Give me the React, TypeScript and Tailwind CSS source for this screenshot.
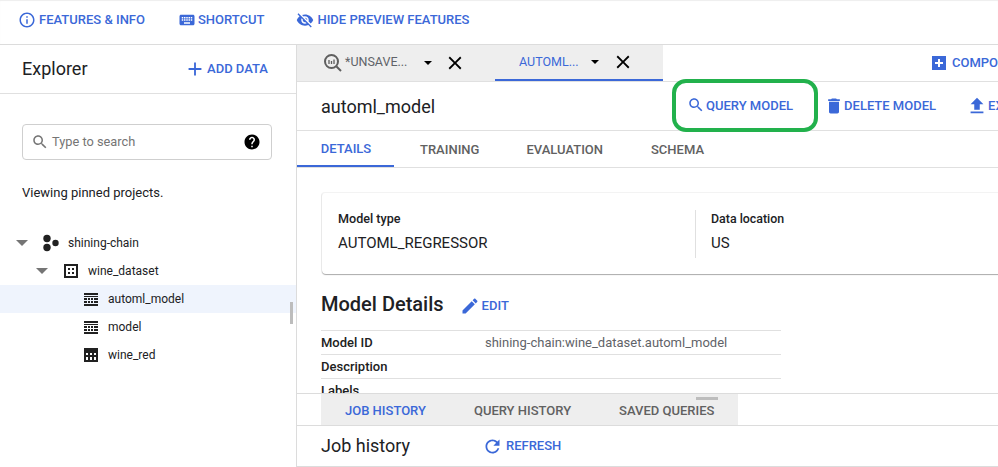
import React from "react";

const Blue = "text-[#3b68d8]";

function Ic({ d, size = 18, className = "", fill = "currentColor" }: { d: string; size?: number; className?: string; fill?: string }) {
  return (
    <svg width={size} height={size} viewBox="0 0 24 24" fill={fill} className={"shrink-0 " + className}>
      <path d={d} />
    </svg>
  );
}

const P = {
  info: "M11 7h2v2h-2zm0 4h2v6h-2zm1-9C6.48 2 2 6.48 2 12s4.48 10 10 10 10-4.48 10-10S17.52 2 12 2zm0 18c-4.41 0-8-3.59-8-8s3.59-8 8-8 8 3.59 8 8-3.59 8-8 8z",
  keyboard: "M20 5H4c-1.1 0-1.99.9-1.99 2L2 17c0 1.1.9 2 2 2h16c1.1 0 2-.9 2-2V7c0-1.1-.9-2-2-2zm-9 3h2v2h-2V8zm0 3h2v2h-2v-2zM8 8h2v2H8V8zm0 3h2v2H8v-2zm-1 2H5v-2h2v2zm0-3H5V8h2v2zm9 7H8v-2h8v2zm0-4h-2v-2h2v2zm0-3h-2V8h2v2zm3 3h-2v-2h2v2zm0-3h-2V8h2v2z",
  eyeOff: "M12 7c2.76 0 5 2.24 5 5 0 .65-.13 1.26-.36 1.83l2.92 2.92c1.51-1.26 2.7-2.89 3.43-4.75-1.73-4.39-6-7.5-11-7.5-1.4 0-2.74.25-3.98.7l2.16 2.16C10.74 7.13 11.35 7 12 7zM2 4.27l2.28 2.28.46.46C3.08 8.3 1.78 10.02 1 12c1.73 4.39 6 7.5 11 7.5 1.55 0 3.03-.3 4.38-.84l.42.42L19.73 22 21 20.73 3.27 3 2 4.27zM7.53 9.8l1.55 1.55c-.05.21-.08.43-.08.65 0 1.66 1.34 3 3 3 .22 0 .44-.03.65-.08l1.55 1.55c-.67.33-1.41.53-2.2.53-2.76 0-5-2.24-5-5 0-.79.2-1.53.53-2.2zm4.31-.78l3.15 3.15.02-.16c0-1.66-1.34-3-3-3l-.17.01z",
  plus: "M19 13h-6v6h-2v-6H5v-2h6V5h2v6h6v2z",
  close: "M19 6.41 17.59 5 12 10.59 6.41 5 5 6.41 10.59 12 5 17.59 6.41 19 12 13.41 17.59 19 19 17.59 13.41 12z",
  search: "M15.5 14h-.79l-.28-.27C15.41 12.59 16 11.11 16 9.5 16 5.91 13.09 3 9.5 3S3 5.91 3 9.5 5.91 16 9.5 16c1.61 0 3.09-.59 4.23-1.57l.27.28v.79l5 4.99L20.49 19l-4.99-5zm-6 0C7.01 14 5 11.99 5 9.5S7.01 5 9.5 5 14 7.01 14 9.5 11.99 14 9.5 14z",
  help: "M12 2C6.48 2 2 6.48 2 12s4.48 10 10 10 10-4.48 10-10S17.52 2 12 2zm1 17h-2v-2h2v2zm2.07-7.75-.9.92C13.45 12.9 13 13.5 13 15h-2v-.5c0-1.1.45-2.1 1.17-2.83l1.24-1.26c.37-.36.59-.86.59-1.41 0-1.1-.9-2-2-2s-2 .9-2 2H8c0-2.21 1.79-4 4-4s4 1.79 4 4c0 .88-.36 1.68-.93 2.25z",
  trash: "M6 19c0 1.1.9 2 2 2h8c1.1 0 2-.9 2-2V7H6v12zM19 4h-3.5l-1-1h-5l-1 1H5v2h14V4z",
  upload: "M9 16h6v-6h4l-7-7-7 7h4zm-4 2h14v2H5z",
  edit: "M3 17.25V21h3.75L17.81 9.94l-3.75-3.75L3 17.25zM20.71 7.04c.39-.39.39-1.02 0-1.41l-2.34-2.34c-.39-.39-1.02-.39-1.41 0l-1.83 1.83 3.75 3.75 1.83-1.83z",
  refresh: "M17.65 6.35C16.2 4.9 14.21 4 12 4c-4.42 0-7.99 3.58-7.99 8s3.57 8 7.99 8c3.73 0 6.84-2.55 7.73-6h-2.08c-.82 2.33-3.04 4-5.65 4-3.31 0-6-2.69-6-6s2.69-6 6-6c1.66 0 3.14.69 4.22 1.78L13 11h7V4l-2.35 2.35z",
};

function TopLink({ icon, label, gap }: { icon: string; label: string; gap: string }) {
  return (
    <div className={`flex items-center ${gap} ${Blue} text-[13px] font-medium`}>
      <Ic d={icon} size={18} />
      <span>{label}</span>
    </div>
  );
}

function Caret({ className = "" }: { className?: string }) {
  return <div className={"h-0 w-0 border-x-[4px] border-t-[4px] border-x-transparent " + className} />;
}

function TreeIcon({ kind }: { kind: "model" | "table" }) {
  if (kind === "model")
    return (
      <svg width="14" height="13" viewBox="0 0 14 13" className="shrink-0" fill="#212121">
        <rect x="0" y="0" width="14" height="2" />
        <rect x="0" y="3" width="14" height="1" />
        <rect x="0" y="5" width="3" height="2" />
        <rect x="4" y="5" width="2" height="2" />
        <rect x="7" y="5" width="2" height="2" />
        <rect x="10" y="5" width="4" height="2" />
        <rect x="0" y="8" width="3" height="2" />
        <rect x="4" y="8" width="2" height="2" />
        <rect x="7" y="8" width="2" height="2" />
        <rect x="10" y="8" width="4" height="2" />
        <rect x="0" y="11" width="14" height="2" />
      </svg>
    );
  return (
    <svg width="14" height="14" viewBox="0 0 14 14" className="shrink-0" fill="#212121">
      <path d="M0 0h14v14H0z" />
      <g fill="#fff">
        <rect x="2" y="5" width="2" height="2" />
        <rect x="6" y="5" width="2" height="2" />
        <rect x="10" y="5" width="2" height="2" />
        <rect x="2" y="9" width="2" height="3" />
        <rect x="6" y="9" width="2" height="3" />
        <rect x="10" y="9" width="2" height="3" />
      </g>
    </svg>
  );
}

function Row({ label, value, last }: { label: string; value?: string; last?: boolean }) {
  return (
    <div className={`flex h-6 items-center ${last ? "" : "border-b border-[#e0e0e0]"}`}>
      <div className="w-[164px] text-[13px] font-medium text-[#212121]">{label}</div>
      {value && <div className="text-[13px] text-[#5f6368]">{value}</div>}
    </div>
  );
}

function Sidebar() {
  return (
    <aside className="flex w-[297px] shrink-0 flex-col border-r border-[#dcdcdc]">
      <div className="flex h-[49px] shrink-0 items-center justify-between border-b border-[#e0e0e0] pb-[1px] pl-[22px] pr-[28px]">
        <h1 className="pb-[1px] text-[18px] text-[#202124]">Explorer</h1>
        <div className={`flex items-center gap-[1px] ${Blue} text-[13px] font-medium`}>
          <Ic d={P.plus} size={22} />
          <span>ADD DATA</span>
        </div>
      </div>
      <div className="mx-[22px] mt-[30px] flex h-9 w-[250px] items-center rounded border border-[#cfcfcf] pl-2 pr-[10px]">
        <Ic d={P.search} size={18} className="text-[#757575]" />
        <span className="ml-[3px] flex-1 text-[12.8px] text-[#757575]">Type to search</span>
        <Ic d={P.help} size={18} className="text-black" />
      </div>
      <p className="ml-[22px] mt-[25px] text-[13px] leading-4 text-[#202124]">Viewing pinned projects.</p>
      <div className="relative mt-[28px] text-[12px] text-[#202124]">
        <div className="flex h-7 items-center pl-[16px]">
          <Caret className="border-x-[6px]! border-t-[6px]! border-t-[#757575]" />
          <svg width="18" height="18" viewBox="0 0 18 18" className="ml-[14px] shrink-0" fill="#212121">
            <circle cx="5" cy="4.5" r="3.7" />
            <circle cx="13.5" cy="9" r="3.2" />
            <circle cx="5" cy="13.5" r="3.7" />
          </svg>
          <span className="ml-[8px]">shining-chain</span>
        </div>
        <div className="flex h-7 items-center pl-[36px]">
          <Caret className="border-x-[6px]! border-t-[6px]! border-t-[#757575]" />
          <svg width="14" height="14" viewBox="0 0 14 14" className="ml-[16px] shrink-0" fill="#212121">
            <path d="M0 0h14v14H0zM2 2v10h10V2z" fillRule="evenodd" />
            <rect x="4" y="4" width="2" height="2" />
            <rect x="8" y="4" width="2" height="2" />
            <rect x="4" y="8" width="2" height="2" />
            <rect x="8" y="8" width="2" height="2" />
          </svg>
          <span className="ml-[10px]">wine_dataset</span>
        </div>
        <div className="flex h-7 items-center bg-[#eff4fd] pl-[84px]">
          <TreeIcon kind="model" />
          <span className="ml-[10px]">automl_model</span>
        </div>
        <div className="flex h-7 items-center pl-[84px]">
          <TreeIcon kind="model" />
          <span className="ml-[10px]">model</span>
        </div>
        <div className="flex h-7 items-center pl-[84px]">
          <TreeIcon kind="table" />
          <span className="ml-[10px]">wine_red</span>
        </div>
        <div className="absolute left-[290px] top-[73px] h-[22px] w-[3px] bg-[#bdbdbd]" />
      </div>
    </aside>
  );
}

function Tabs() {
  return (
    <div className="flex h-[37px] shrink-0 items-stretch border-b border-[#e0e0e0]">
      <div className="flex w-[198px] shrink-0 items-center bg-[#eeeeee] pb-[1px] pl-[26px]">
        <svg width="20" height="20" viewBox="0 0 20 20" className="shrink-0" fill="none">
          <circle cx="8.5" cy="8.5" r="6.5" stroke="#5f5f5f" strokeWidth="2" />
          <path d="M13.5 13.5 18 18" stroke="#5f5f5f" strokeWidth="2" />
          <path d="M6 7v4M8.5 8v3M11 6.5V11" stroke="#5f5f5f" strokeWidth="1.3" />
        </svg>
        <span className="ml-[2px] w-[66px] shrink-0 whitespace-nowrap text-[12.5px] text-[#5f6368]">*UNSAVE...</span>
        <Caret className="ml-[13px] shrink-0 border-t-black" />
        <Ic d={P.close} size={22} className="ml-[12px] text-black" />
      </div>
      <div className="flex w-[168px] shrink-0 items-center border-b-2 border-[#3b68d8] bg-[#eeeeee] pl-[24px]">
        <span className={`w-[66px] shrink-0 whitespace-nowrap text-[12.5px] ${Blue}`}>AUTOML...</span>
        <Caret className="ml-[6px] shrink-0 border-t-black" />
        <Ic d={P.close} size={22} className="ml-[13px] text-black" />
      </div>
      <div className={`ml-[269px] flex shrink-0 items-center gap-[6px] whitespace-nowrap ${Blue} text-[13px] font-medium`}>
        <svg width="14" height="14" viewBox="0 0 14 14" className="shrink-0">
          <path fill="#3b68d8" d="M0 0h14v14H0z" />
          <path fill="#fff" d="M6 3h2v3h3v2H8v3H6V8H3V6h3z" />
        </svg>
        <span>COMPOSE NEW QUERY</span>
      </div>
    </div>
  );
}

function Toolbar() {
  return (
    <div className="relative flex h-[49px] shrink-0 items-center border-b border-[#e0e0e0] pl-[24px]">
      <h2 className="w-[366px] shrink-0 text-[18px] text-[#202124]">automl_model</h2>
      <div className={`flex shrink-0 items-center whitespace-nowrap ${Blue} text-[13px] font-medium`}>
        <Ic d={P.search} size={18} className="mb-[2px]" />
        <span className="ml-[1px]">QUERY MODEL</span>
        <Ic d={P.trash} size={20} className="ml-[31px]" />
        <span>DELETE MODEL</span>
        <Ic d={P.upload} size={22} className="ml-[30px]" />
        <span>EXPORT MODEL</span>
      </div>
      <div className="absolute left-[375px] top-[-3px] h-[53px] w-[146px] rounded-[14px] border-[4px] border-[#22b14c]" />
    </div>
  );
}

function SubTabs() {
  return (
    <div className="flex h-[37px] shrink-0 items-stretch border-b border-[#e0e0e0] text-[13px] font-medium text-[#616161]">
      <div className={`flex w-[97px] shrink-0 items-center justify-center border-b-2 border-[#3b68d8] pl-[1px] pt-[2px] ${Blue}`}>DETAILS</div>
      <div className="ml-[26px] flex items-center pt-[1px]">TRAINING</div>
      <div className="ml-[47px] flex items-center pt-[1px]">EVALUATION</div>
      <div className="ml-[48px] flex items-center pt-[1px]">SCHEMA</div>
    </div>
  );
}

function Details() {
  return (
    <div className="min-h-0 flex-1 overflow-hidden pl-[25px]">
      <div className="mt-[24px] flex h-[82px] w-[800px] items-center rounded-sm border-t border-[#f3f3f3] pl-[16px] shadow-[0_1px_1px_#aaaaaa,-1px_0_0_#f0f0f0]">
        <div className="h-[48px] w-[358px] shrink-0 border-r border-[#e0e0e0]">
          <div className="text-[12.6px] font-medium leading-[18px] text-[#202124]">Model type</div>
          <div className="mt-[6px] text-[15px] leading-[18px] text-[#202124]">AUTOML_REGRESSOR</div>
        </div>
        <div className="flex h-[48px] flex-col pl-[15px]">
          <div className="text-[12.4px] font-medium leading-[18px] text-[#202124]">Data location</div>
          <div className="mt-[6px] text-[15px] leading-[18px] text-[#202124]">US</div>
        </div>
      </div>
      <div className="mt-[18px] flex h-[24px] items-center">
        <h3 className="-ml-[1px] text-[20px] font-medium text-[#202124]">Model Details</h3>
        <Ic d={P.edit} size={20} className={`ml-[16px] mt-[3px] ${Blue}`} />
        <span className={`ml-[2px] mt-[3px] text-[13px] font-medium ${Blue}`}>EDIT</span>
      </div>
      <div className="mt-[14px] w-[460px] -translate-x-[1px] border-t border-[#e0e0e0]">
        <Row label="Model ID" value="shining-chain:wine_dataset.automl_model" />
        <Row label="Description" />
        <Row label="Labels" last />
      </div>
    </div>
  );
}

function BottomPanel() {
  return (
    <div className="shrink-0 border-t border-[#dcdcdc]">
      <div className="flex h-[32px] border-b border-[#dcdcdc] pl-[24px]">
        <div className="relative flex w-[417px] items-center bg-[#eeeeee] pt-[3px] text-[13px] font-medium text-[#616161]">
          <span className={`ml-[24px] ${Blue}`}>JOB HISTORY</span>
          <span className="ml-[48px]">QUERY HISTORY</span>
          <span className="ml-[48px]">SAVED QUERIES</span>
          <div className="absolute left-[375px] top-[3px] h-[3px] w-[22px] bg-[#bdbdbd]" />
        </div>
      </div>
      <div className="flex h-[41px] items-center border-b border-[#dcdcdc] pl-[24px]">
        <h2 className="w-[161px] shrink-0 pb-[2px] text-[18px] text-[#202124]">Job history</h2>
        <Ic d={P.refresh} size={21} className={Blue} />
        <span className={`ml-[3px] text-[13px] font-medium ${Blue}`}>REFRESH</span>
      </div>
    </div>
  );
}

export default function App() {
  return (
    <div className="flex h-[467px] w-[998px] flex-col overflow-hidden bg-white font-['Roboto',sans-serif]">
      <header className="flex h-[45px] shrink-0 items-center border-b border-[#dcdcdc] pb-[5px] pl-[18px] shadow-[inset_0_1px_1px_#eeeeee]">
        <TopLink icon={P.info} label="FEATURES & INFO" gap="gap-[3px]" />
        <div className="ml-[33px]"><TopLink icon={P.keyboard} label="SHORTCUT" gap="gap-[2px]" /></div>
        <div className="ml-[32px]"><TopLink icon={P.eyeOff} label="HIDE PREVIEW FEATURES" gap="gap-[3px]" /></div>
      </header>
      <div className="flex min-h-0 flex-1">
        <Sidebar />
        <main className="flex min-w-0 flex-1 flex-col overflow-hidden">
          <Tabs />
          <Toolbar />
          <SubTabs />
          <Details />
          <BottomPanel />
        </main>
      </div>
    </div>
  );
}
